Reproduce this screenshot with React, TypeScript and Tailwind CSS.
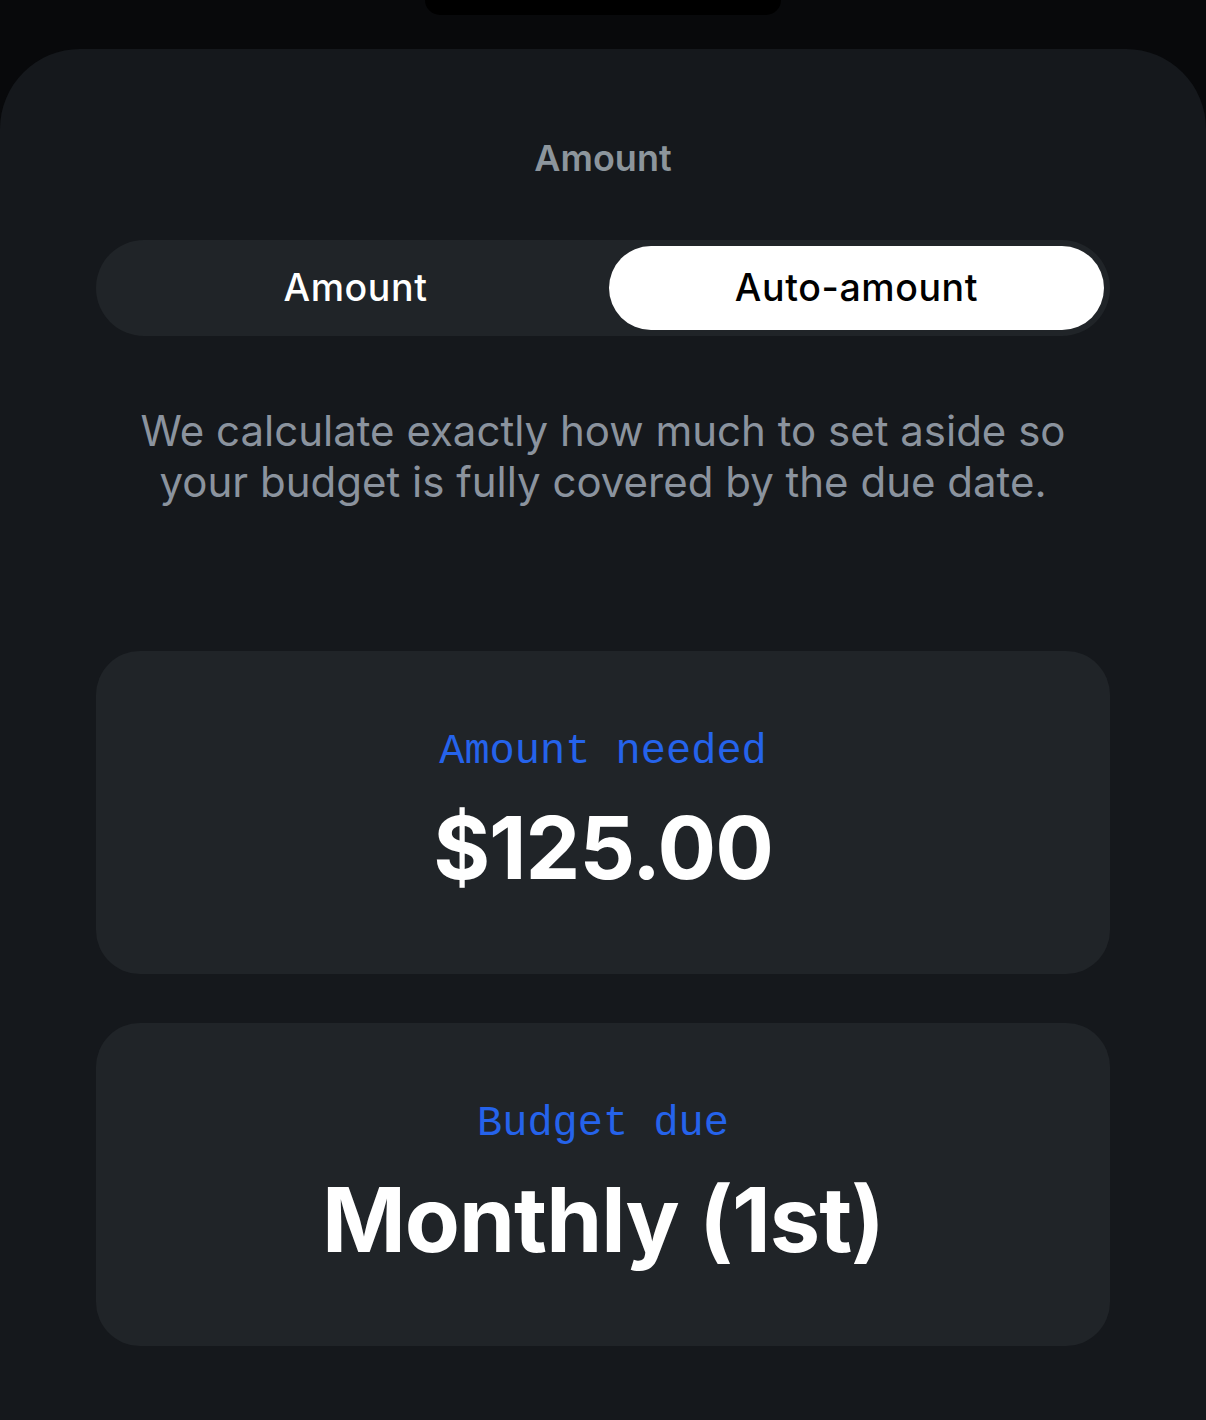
export default function App() {
  return (
    <div className="min-h-[1420px] w-[1206px] bg-[#08090b] flex flex-col items-center font-['Inter','Noto_Sans',sans-serif]">
      {/* island */}
      <div className="w-[356px] h-[15px] bg-black rounded-b-[16px]" />

      <div className="mt-[34px] w-full flex-1 bg-[#15181c] rounded-t-[80px] px-[96px] pt-[88px] flex flex-col items-center">
        <h1 className="text-[36px] leading-[42px] font-semibold text-[#8c959c]">Amount</h1>

        {/* segmented control */}
        <div className="mt-[61px] w-full h-[96px] rounded-full bg-[#202428] p-[6px] grid grid-cols-[1fr_495px]">
          <button className="rounded-full text-[37.5px] tracking-[0.6px] font-medium text-white">Amount</button>
          <button className="rounded-full bg-white text-[37.5px] tracking-[0.6px] font-medium text-black">Auto-amount</button>
        </div>

        <p className="mt-[69px] text-center text-[42px] leading-[51px] text-[#8b939e]">
          We calculate exactly how much to set aside so
          <br />
          your budget is fully covered by the due date.
        </p>

        <div className="mt-[144px] w-full flex flex-col gap-[49px]">
          <div className="h-[323px] rounded-[44px] bg-[#202428] flex flex-col items-center justify-center gap-[22px]">
            <span className="font-['Liberation_Mono',monospace] text-[42px] leading-[48px] text-[#2563eb]">Amount needed</span>
            <span className="text-[87px] leading-[100px] font-bold text-white tracking-[-1px]">$125.00</span>
          </div>
          <div className="h-[323px] rounded-[44px] bg-[#202428] flex flex-col items-center justify-center gap-[22px]">
            <span className="font-['Liberation_Mono',monospace] text-[42px] leading-[48px] text-[#2563eb]">Budget due</span>
            <span className="text-[90px] leading-[100px] font-bold text-white tracking-[-1px]">Monthly (1st)</span>
          </div>
        </div>
      </div>
    </div>
  )
}
